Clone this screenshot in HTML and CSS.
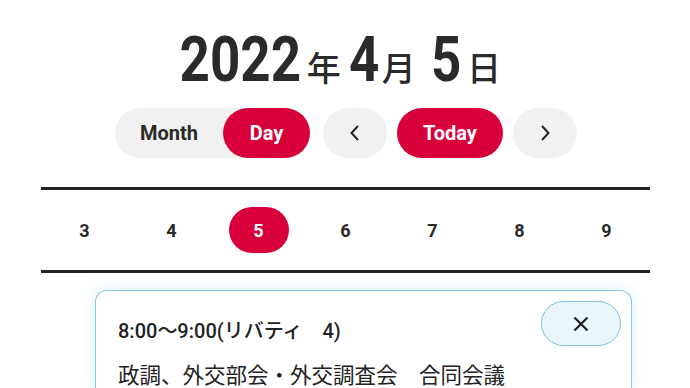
FILE: index.html
```html
<!DOCTYPE html>
<html lang="ja">
<head>
<meta charset="utf-8">
<link rel="stylesheet" href="styles.css">
</head>
<body>
<div class="page">
  <h1 class="title"><span class="num n4">2022</span><span class="unit u1">年</span><span class="num n1">4</span><span class="unit u2">月</span><span class="num n1 n5">5</span><span class="unit u3">日</span></h1>
  <div class="toolbar">
    <div class="seg">
      <span class="seg-item">Month</span>
      <span class="seg-item active">Day</span>
    </div>
    <button class="nav" aria-label="prev">
      <svg width="14" height="20" viewBox="0 0 14 20"><path d="M10 3 L3.5 10 L10 17" fill="none" stroke="#222" stroke-width="2"/></svg>
    </button>
    <button class="today">Today</button>
    <button class="nav" aria-label="next">
      <svg width="14" height="20" viewBox="0 0 14 20"><path d="M4 3 L10.5 10 L4 17" fill="none" stroke="#222" stroke-width="2"/></svg>
    </button>
  </div>
  <div class="strip">
    <span class="day">3</span>
    <span class="day">4</span>
    <span class="day"><span class="sel">5</span></span>
    <span class="day">6</span>
    <span class="day">7</span>
    <span class="day">8</span>
    <span class="day">9</span>
  </div>
  <div class="card">
    <button class="close" aria-label="close">
      <svg width="18" height="18" viewBox="0 0 18 18"><path d="M2.5 2.5 L15.5 15.5 M15.5 2.5 L2.5 15.5" stroke="#222" stroke-width="2.2"/></svg>
    </button>
    <p class="time">8:00〜9:00(リバティ　4)</p>
    <p class="name">政調、外交部会・外交調査会　合同会議</p>
  </div>
</div>
</body>
</html>
```

FILE: styles.css
```css
* { box-sizing: border-box; }
html, body { margin: 0; padding: 0; background: #fff; }
body {
  width: 690px;
  height: 388px;
  overflow: hidden;
  font-family: "Roboto", "Noto Sans CJK JP", sans-serif;
  color: #222;
}
.page { padding-top: 27px; }
.title {
  margin: 0;
  padding-right: 10px;
  display: flex;
  justify-content: center;
  align-items: baseline;
  font-weight: 700;
  line-height: 66px;
  height: 65px;
  color: #2a2a2a;
}
.num {
  display: inline-block;
  font-size: 63px;
  transform: scaleX(0.84);
}
.n4 { margin: 0 -11px 0 -11px; }
.n1 { margin: 0 -3px; }
.unit {
  font-family: "Noto Sans CJK JP", sans-serif;
  font-size: 34px;
  font-weight: 500;
}
.u1 { margin: 0 8px 0 5px; }
.u2 { margin: 0 15px 0 3px; }
.u3 { margin: 0 0 0 6px; }
.toolbar {
  margin-top: 16px;
  display: flex;
  justify-content: center;
  align-items: center;
  gap: 10px;
  padding-left: 2px;
}
.seg {
  display: flex;
  width: 195px;
  height: 50px;
  background: #f1f1f1;
  border-radius: 25px;
  margin-right: 3px;
}
.seg-item {
  flex: 1 1 0;
  display: flex;
  align-items: center;
  justify-content: center;
  font-size: 20px;
  font-weight: 700;
  color: #2a2a2a;
  border-radius: 25px;
}
.seg-item:first-child { flex: 0 0 108px; }
.seg-item.active { background: #d7003a; color: #fff; }
button {
  font-family: inherit;
  border: 0;
  padding: 0;
  cursor: pointer;
}
.nav {
  width: 64px;
  height: 50px;
  border-radius: 25px;
  background: #f1f1f1;
  display: flex;
  align-items: center;
  justify-content: center;
}
.today {
  width: 106px;
  height: 50px;
  border-radius: 25px;
  background: #d7003a;
  color: #fff;
  font-size: 20px;
  font-weight: 700;
}
.strip {
  margin: 29px 40px 0 41px;
  height: 86px;
  border-top: 3px solid #222;
  border-bottom: 3px solid #222;
  display: grid;
  grid-template-columns: repeat(7, 1fr);
  align-items: center;
}
.day {
  display: flex;
  justify-content: center;
  align-items: center;
  font-size: 18px;
  font-weight: 700;
  color: #2a2a2a;
}
.sel {
  width: 60px;
  height: 46px;
  border-radius: 23px;
  background: #d7003a;
  color: #fff;
  display: flex;
  align-items: center;
  justify-content: center;
}
.card {
  position: relative;
  margin: 17px 0 0 95px;
  width: 537px;
  height: 100px;
  border: 1.5px solid #86c8df;
  border-bottom: 0;
  border-radius: 12px 12px 0 0;
  background: #fff;
  box-shadow: 0 0 14px rgba(150, 215, 240, 0.35);
  padding: 25px 0 0 22px;
  font-family: "Roboto", "Noto Sans CJK JP", sans-serif;
}
.close {
  position: absolute;
  top: 10px;
  right: 10px;
  width: 80px;
  height: 45px;
  border-radius: 23px;
  background: #e9f6fc;
  border: 1.5px solid #7fc3dc;
  display: flex;
  align-items: center;
  justify-content: center;
}
.time {
  margin: 0;
  font-size: 20px;
  font-weight: 500;
  line-height: 30px;
  color: #222;
}
.name {
  margin: 12px 0 0 0;
  font-family: "Noto Sans CJK JP", sans-serif;
  font-size: 21.5px;
  font-weight: 400;
  line-height: 32px;
  color: #222;
}
```
